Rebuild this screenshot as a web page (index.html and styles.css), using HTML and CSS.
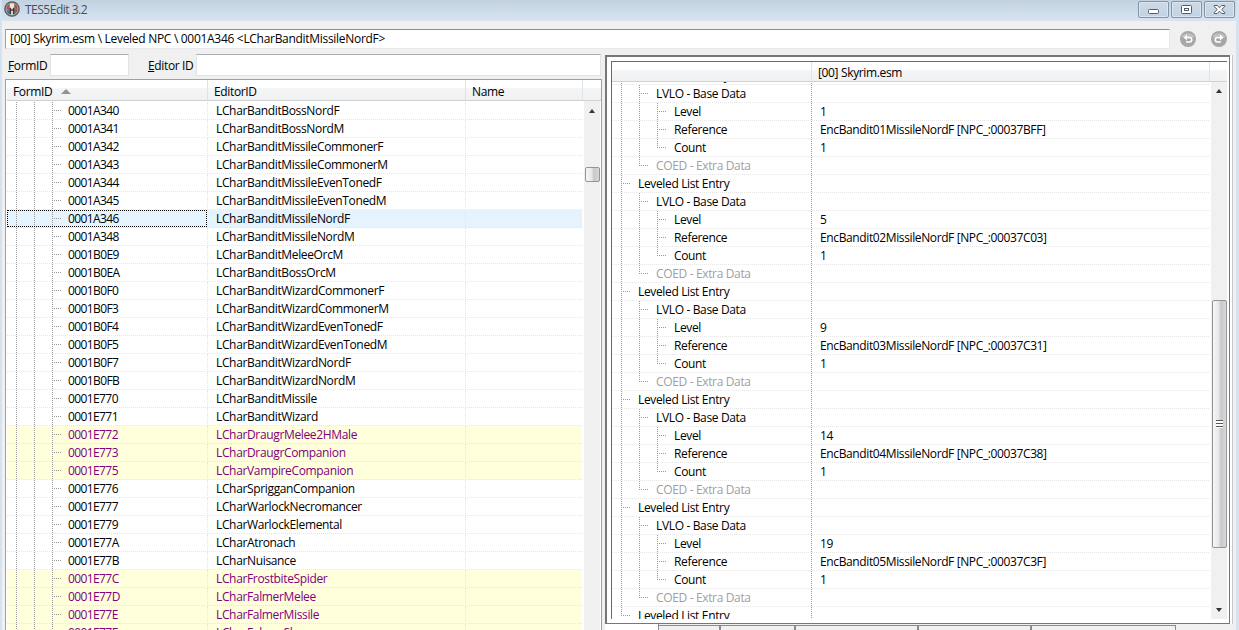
FILE: index.html
```
<!DOCTYPE html>
<html lang="en">
<head>
  <meta charset="UTF-8" />
  <title>TES5Edit 3.2</title>
  <link rel="stylesheet" href="styles.css">
</head>
<body>
<div class="window">

  <div class="titlebar">
    <svg class="app-icon" width="16" height="16" viewBox="0 0 16 16">
      <circle cx="8" cy="8" r="7.2" fill="#8f9a9c" stroke="#4f5a60" stroke-width="1.2"/>
      <path d="M3 5l2.500-2v4l-1 2-2-1z" fill="#c05048"/>
      <path d="M10.500 3l2.500 2v3l-2.500-1z" fill="#b84a40"/>
      <path d="M6 2.500h4v3.500l-1 1H7L6 6z" fill="#efe8cf"/>
      <path d="M3 10l2-1v4l-2-2z" fill="#3a6f9a"/>
      <path d="M11 8l2.500 0-1 3-1.500 1z" fill="#c04a45"/>
      <path d="M5.500 7h1.500v6H5.500zM9 7h1.500v6H9z" fill="#3b3438"/>
      <path d="M7 7h2v7H7z" fill="#d8d4c4"/>
      <path d="M7 8h2v2H7z" fill="#b8473f"/>
    </svg>
    <span class="caption">TES5Edit 3.2</span>
    <div class="buttons">
      <button><svg width="14" height="10"><rect x="1.500" y="4.500" width="10" height="4" rx="1" fill="#fff" stroke="#555a69"/></svg></button>
      <button><svg width="14" height="10"><rect x="1.500" y=".5" width="10" height="8" rx="1" fill="#fff" stroke="#555a69"/><rect x="4.500" y="3.500" width="4" height="2" fill="#fff" stroke="#555a69"/></svg></button>
      <button><svg width="14" height="10"><path d="M1.200.5h3L6.500 2.800 8.800.5h3v1L8.700 4.500l3.100 3v1h-3L6.500 6.200 4.200 8.500h-3v-1l3.100-3-3.100-3z" fill="#fff" stroke="#555a69"/></svg></button>
    </div>
  </div>

  <div class="path-row">
    <div class="path">[00] Skyrim.esm \ Leveled NPC \ 0001A346 &lt;LCharBanditMissileNordF&gt;</div>
    <svg class="nav" width="18" height="18" viewBox="0 0 18 18">
      <circle cx="9" cy="9" r="8" fill="#a7a7a7"/>
      <path d="M2.500 7a7 6 0 0 1 13 0q-6 3-13 0z" fill="#c0c0c0"/>
      <path d="M7 7.500h3.500a2.200 2.200 0 0 1 0 4.500H7" fill="none" stroke="#fff" stroke-width="1.600"/>
      <path d="M4.500 7.500L8 4.500v6z" fill="#fff"/>
    </svg>
    <svg class="nav" width="18" height="18" viewBox="0 0 18 18">
      <circle cx="9" cy="9" r="8" fill="#a7a7a7"/>
      <path d="M2.500 7a7 6 0 0 1 13 0q-6 3-13 0z" fill="#c0c0c0"/>
      <path d="M11 7.500H7.500a2.200 2.200 0 0 0 0 4.500H11" fill="none" stroke="#fff" stroke-width="1.600"/>
      <path d="M13.500 7.500L10 4.500v6z" fill="#fff"/>
    </svg>
  </div>

  <div class="main">
    <div class="left">
      <div class="search">
        <label class="lbl-form"><u>F</u>ormID</label>
        <div class="field field-form"></div>
        <label class="lbl-editor"><u>E</u>ditor ID</label>
        <div class="field field-editor"></div>
      </div>
      <div class="tree nav-tree">
        <div class="header">
          <div class="h-form">FormID <i class="sort"></i></div>
          <div class="h-editor">EditorID</div>
          <div class="h-name">Name</div>
        </div>
        <div class="body">
          <div class="rows" id="navRows"></div>
          <div class="scrollbar">
            <i class="arrow up"></i>
            <i class="thumb small"></i>
          </div>
        </div>
      </div>
    </div>

    <div class="right">
      <div class="page">
        <div class="tree view-tree">
          <div class="header">
            <div class="h-label"></div>
            <div class="h-file">[00] Skyrim.esm</div>
          </div>
          <div class="body">
            <div class="rows" id="viewRows"></div>
            <div class="scrollbar">
              <i class="arrow up"></i>
              <i class="thumb big"><i class="grip"></i></i>
              <i class="arrow down"></i>
            </div>
          </div>
        </div>
      </div>
      <div class="tabs">
        <div class="tab t1 active"></div>
        <div class="tab t2"></div>
        <div class="tab t3"></div>
        <div class="tab t4"></div>
        <div class="tab t5"></div>
        <div class="tab t6"></div>
      </div>
    </div>
  </div>
</div>

<script>
  // id, editor id, overridden
  const records = [
    ['0001A340', 'LCharBanditBossNordF'],
    ['0001A341', 'LCharBanditBossNordM'],
    ['0001A342', 'LCharBanditMissileCommonerF'],
    ['0001A343', 'LCharBanditMissileCommonerM'],
    ['0001A344', 'LCharBanditMissileEvenTonedF'],
    ['0001A345', 'LCharBanditMissileEvenTonedM'],
    ['0001A346', 'LCharBanditMissileNordF'],
    ['0001A348', 'LCharBanditMissileNordM'],
    ['0001B0E9', 'LCharBanditMeleeOrcM'],
    ['0001B0EA', 'LCharBanditBossOrcM'],
    ['0001B0F0', 'LCharBanditWizardCommonerF'],
    ['0001B0F3', 'LCharBanditWizardCommonerM'],
    ['0001B0F4', 'LCharBanditWizardEvenTonedF'],
    ['0001B0F5', 'LCharBanditWizardEvenTonedM'],
    ['0001B0F7', 'LCharBanditWizardNordF'],
    ['0001B0FB', 'LCharBanditWizardNordM'],
    ['0001E770', 'LCharBanditMissile'],
    ['0001E771', 'LCharBanditWizard'],
    ['0001E772', 'LCharDraugrMelee2HMale', true],
    ['0001E773', 'LCharDraugrCompanion', true],
    ['0001E775', 'LCharVampireCompanion', true],
    ['0001E776', 'LCharSprigganCompanion'],
    ['0001E777', 'LCharWarlockNecromancer'],
    ['0001E779', 'LCharWarlockElemental'],
    ['0001E77A', 'LCharAtronach'],
    ['0001E77B', 'LCharNuisance'],
    ['0001E77C', 'LCharFrostbiteSpider', true],
    ['0001E77D', 'LCharFalmerMelee', true],
    ['0001E77E', 'LCharFalmerMissile', true],
    ['0001E77F', 'LCharFalmerShaman', true]
  ];
  const selected = '0001A346';

  document.getElementById('navRows').innerHTML = records.map(([id, name, over]) => `
    <div class="row ${over ? 'over' : ''} ${id === selected ? 'selected' : ''}">
      <div class="c-form"><i class="g line"></i><i class="g line"></i><i class="g line stub"></i><span>${id}</span></div>
      <div class="c-editor"><span>${name}</span></div>
      <div class="c-name"></div>
    </div>`).join('');

  const entries = [
    [1, 'EncBandit01MissileNordF [NPC_:00037BFF]'],
    [5, 'EncBandit02MissileNordF [NPC_:00037C03]'],
    [9, 'EncBandit03MissileNordF [NPC_:00037C31]'],
    [14, 'EncBandit04MissileNordF [NPC_:00037C38]'],
    [19, 'EncBandit05MissileNordF [NPC_:00037C3F]']
  ];

  function viewRow(guides, label, value = '', cls = '') {
    const g = guides.map(c => `<i class="g ${c}"></i>`).join('');
    return `<div class="row ${cls}"><div class="c-label">${g}<span>${label}</span></div><div class="c-value"><span>${value}</span></div></div>`;
  }

  let html = '';
  for (const [level, ref] of entries) {
    html += viewRow(['line stub'], 'Leveled List Entry');
    html += viewRow(['line', 'line stub'], 'LVLO - Base Data');
    html += viewRow(['line', 'line', 'line stub'], 'Level', level);
    html += viewRow(['line', 'line', 'line stub'], 'Reference', ref);
    html += viewRow(['line', 'line', 'end stub'], 'Count', 1);
    html += viewRow(['line', 'end stub'], 'COED - Extra Data', '', 'missing');
  }
  html += viewRow(['end stub'], 'Leveled List Entry');
  document.getElementById('viewRows').innerHTML = html;
</script>
</body>
</html>
```
FILE: styles.css
```
* {
  box-sizing: border-box;
}
body {
  margin: 0;
  overflow: hidden;
  font-family: "Open Sans", "Noto Sans", sans-serif;
  font-size: 12px;
  letter-spacing: -0.35px;
  color: #000;
}
i {
  display: block;
  font-style: normal;
}
.window {
  display: flex;
  flex-direction: column;
  width: 1239px;
  height: 630px;
  background: #f0f0f0;
  border-left: 2px solid #d5e2ef;
  border-right: 3px solid #d5e2ef;
  overflow: hidden;
}

/* title bar */
.titlebar {
  display: flex;
  flex: none;
  height: 21px;
  margin: 0 -3px 0 -2px;
  padding-left: 4px;
  background: linear-gradient(#c2d1e0, #d8e4f0);
}
.app-icon {
  margin-top: 1px;
}
.caption {
  flex: 1;
  margin-left: 5px;
  line-height: 20px;
  letter-spacing: -0.5px;
  color: #46505c;
}
.buttons {
  display: flex;
  gap: 2px;
  margin-right: 4px;
}
.buttons button {
  display: flex;
  align-items: center;
  justify-content: center;
  width: 31px;
  height: 17px;
  margin-top: 1px;
  padding: 0;
  background: linear-gradient(#ccd9e7, #c3d2e2);
  border: 1px solid #8493a5;
  border-radius: 2px;
  box-shadow: inset 0 0 0 1px #dbe6f1;
}

.path-row {
  display: flex;
  flex: none;
  height: 34px;
  padding: 8px 0 0 3px;
}
.path {
  flex: none;
  width: 1165px;
  height: 20px;
  margin-right: 9px;
  padding-left: 4px;
  line-height: 18px;
  letter-spacing: -0.3px;
  background: #fff;
  border: 1px solid #e8e8e8;
  border-top-color: #8c8c8c;
  border-left-color: #a0a0a0;
}
.nav {
  flex: none;
  margin: 1px 13px 0 0;
}

.main {
  display: flex;
  flex: 1;
  min-height: 0;
}
.left {
  display: flex;
  flex: none;
  flex-direction: column;
  width: 600px;
  padding-left: 3px;
}
.search {
  display: flex;
  flex: none;
  height: 24px;
  line-height: 22px;
  padding-left: 3px;
}
.field {
  height: 22px;
  margin-top: -1px;
  background: #fff;
  border: 1px solid #e3e3e3;
  border-top-color: #abadb3;
}
.lbl-form {
  width: 42px;
}
.field-form {
  width: 79px;
}
.lbl-editor {
  width: 67px;
  padding-left: 19px;
  white-space: nowrap;
}
.field-editor {
  width: 405px;
}

/* trees */
.tree {
  display: flex;
  flex-direction: column;
  min-height: 0;
  background: #fff;
}
.nav-tree {
  flex: 1;
  width: 597px;
  border: 1px solid #a0a0a0;
  border-bottom: 0;
  padding-left: 1px;
}
.header {
  display: flex;
  flex: none;
  height: 21px;
  line-height: 23px;
  background: linear-gradient(#fff 40%, #f4f5f6 41%, #f0f1f3);
  border-bottom: 1px solid #d0d1d3;
}
.header > div {
  border-right: 1px solid #e1e2e4;
}
.h-form {
  display: flex;
  width: 201px;
  padding-left: 6px;
}
.sort {
  width: 0;
  height: 0;
  margin: 9px 0 0 9px;
  border: 5px solid transparent;
  border-top: 0;
  border-bottom-color: #939393;
}
.h-editor {
  width: 258px;
  padding-left: 6px;
}
.h-name {
  width: 117px;
  padding-left: 6px;
}
.body {
  display: flex;
  flex: 1;
  min-height: 0;
  overflow: hidden;
}
.nav-tree .rows {
  width: 575px;
  padding-top: 1px;
}
.row {
  display: flex;
  height: 18px;
  line-height: 17px;
  white-space: nowrap;
  background: repeating-linear-gradient(90deg, #e6e6e6 0 1px, transparent 1px 2px) bottom / 100% 1px no-repeat;
}
.row > div {
  display: flex;
  height: 18px;
}
.c-form {
  width: 201px;
  padding-left: 9px;
  border-right: 1px dotted #e6e6e6;
}
.c-form span {
  margin-left: -2px;
  letter-spacing: -0.6px;
}
.c-editor {
  width: 258px;
  padding-left: 8px;
  border-right: 1px dotted #e6e6e6;
}
.over {
  color: #800080;
  background-color: #ffffdc;
}
.selected {
  background-color: #e5f3ff;
}
.selected .c-form {
  width: 200px;
  height: 17px;
  margin-right: 1px;
  border-right: 0;
  outline: 1px dotted #000;
  outline-offset: -1px;
}

/* tree guides */
.g {
  flex: none;
  width: 18px;
  height: 18px;
  background-repeat: no-repeat;
  background-position: 0 0, 0 8px;
}
.g.line {
  background-image: repeating-linear-gradient(#999 0 1px, transparent 1px 2px);
  background-size: 1px 18px;
}
.g.line.stub,
.g.end.stub {
  background-image: repeating-linear-gradient(#999 0 1px, transparent 1px 2px), repeating-linear-gradient(90deg, #999 0 1px, transparent 1px 2px);
  background-size: 1px 18px, 10px 1px;
}
.g.end.stub {
  background-size: 1px 9px, 10px 1px;
}

/* record view */
.right {
  display: flex;
  flex: none;
  flex-direction: column;
  width: 628px;
  margin-left: 3px;
}
.page {
  flex: none;
  display: flex;
  width: 625px;
  height: 569px;
  padding: 4px 2px 4px 4px;
  background: #fff;
  border: 2px solid #777;
  border-width: 2px 1px 1px 2px;
  box-shadow: 2px 0 #fff, 3px 0 #c8c8c8;
}
.view-tree {
  width: 616px;
  border-top: 1px solid #696969;
  border-left: 1px solid #696969;
}
.view-tree .header {
  height: 20px;
  line-height: 21px;
}
.h-label {
  width: 200px;
}
.h-file {
  width: 398px;
  padding-left: 6px;
}
.view-tree .rows {
  flex: none;
  width: 598px;
  margin-top: -15px;
}
.c-label {
  width: 200px;
  padding-left: 9px;
  background: repeating-linear-gradient(#999 0 1px, transparent 1px 2px) right / 1px 100% no-repeat;
}
.c-label span {
  margin-left: -1px;
}
.c-value {
  padding-left: 8px;
  letter-spacing: -0.38px;
}
.missing {
  color: #a0a0a0;
}

/* scroll bars */
.scrollbar {
  display: flex;
  flex: none;
  flex-direction: column;
  align-items: center;
  width: 16px;
  margin-left: 2px;
  background: #f0f0f0;
}
.view-tree .scrollbar {
  margin-left: 1px;
}
.arrow {
  flex: none;
  width: 0;
  height: 0;
  border: 3.5px solid transparent;
}
.arrow.up {
  margin-top: 8px;
  border-top: 0;
  border-bottom: 4px solid #333;
}
.view-tree .arrow.up {
  margin-top: 7px;
}
.arrow.down {
  margin-top: 60px;
  border-bottom: 0;
  border-top: 4px solid #333;
}
.thumb {
  flex: none;
  width: 15px;
  border: 1px solid #949494;
  border-radius: 2px;
  background: linear-gradient(90deg, #f7f7f7, #e6e6e8 45%, #c8c8cc 60%, #d8d8da);
}
.thumb.small {
  height: 15px;
  margin-top: 54px;
}
.thumb.big {
  display: flex;
  align-items: center;
  justify-content: center;
  height: 248px;
  margin-top: 207px;
}
.grip {
  width: 7px;
  height: 8px;
  background: repeating-linear-gradient(#555 0 1px, #fff 1px 3px);
}

.tabs {
  display: flex;
  align-items: flex-start;
  height: 6px;
}
.tab {
  height: 6px;
  margin-top: 1px;
  background: #f1f1f1;
  border-top: 1px solid #898c95;
  border-right: 2px solid #898c95;
}
.tab.active {
  margin-top: 0;
  background: #fff;
  border-top: 0;
  border-right-width: 1px;
}
.t1 { width: 54px; }
.t2 { width: 62px; }
.t3 { width: 75px; }
.t4 { width: 123px; }
.t5 { width: 113px; }
.t6 {
  width: 144px;
  border-right-width: 1px;
}
```
